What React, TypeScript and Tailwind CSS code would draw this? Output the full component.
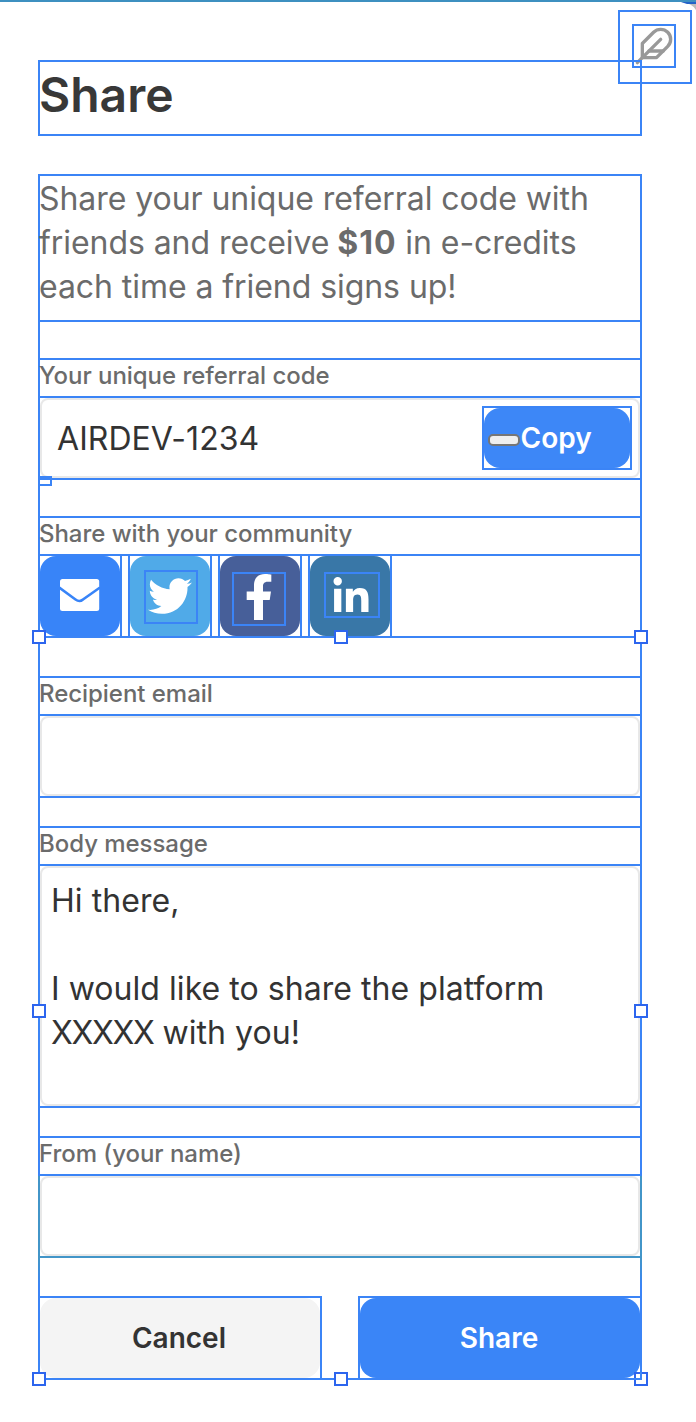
import type { ReactNode } from "react";
import { FaFacebookF, FaLinkedinIn, FaTwitter } from "react-icons/fa";

function FeatherIcon() {
    return (
        <svg className="shrink-0" width="40" height="40" viewBox="0 0 24 24" fill="none" stroke="currentColor" strokeWidth="2" strokeLinecap="round" strokeLinejoin="round">
            <path d="M20.24 12.24a6 6 0 0 0-8.49-8.49L5 10.5V19h8.5z" />
            <path d="M16 8L2 22" />
            <path d="M17.5 15H9" />
        </svg>
    )
}

function Handle({ className }: { className: string }) {
    return <span className={`absolute w-3.5 h-3.5 border-2 border-[#2d65ee] bg-white ${className}`} />
}

function Label({ children }: { children: ReactNode }) {
    return (
        <label className="block h-[38px] border-t-2 border-[#3b84f6] -indent-px text-2xl leading-[32px] tracking-[-0.04px] font-medium text-[#6b6b6b] whitespace-nowrap">
            {children}
        </label>
    )
}

function Tile({ className, children }: { className: string, children: ReactNode }) {
    return (
        <div className="w-[84px] h-20 border-x-2 border-[#3b84f6]">
            <button className={`relative w-20 h-20 rounded-2xl flex items-center justify-center text-white ${className}`}>
                {children}
            </button>
        </div>
    )
}

function App() {
    return (
        <div className="relative w-[696px] h-[1422px] overflow-hidden bg-white font-['Inter',sans-serif]">
            {/* Top edge of the popup */}
            <div className="h-0.5 bg-[#3e90c0]" />
            <svg className="absolute right-0 top-0.5" width="15" height="8" viewBox="0 0 15 8">
                <path d="M0 0H15V8Q11 1 0 0Z" fill="#bdbdbd" />
                <path d="M0 0H15V2H6Z" fill="#2463c8" />
            </svg>

            {/* Close button */}
            <button className="absolute left-[618px] top-2.5 w-[74px] h-[74px] border-2 border-[#3b84f6] flex items-start justify-start pl-3 pt-3">
                <span className="w-11 h-11 border-2 border-[#3b84f6] flex items-center justify-center text-[#999999]">
                    <FeatherIcon />
                </span>
            </button>

            <main className="relative ml-[38px] mt-[58px] w-[604px]">
                <h1 className="h-[76px] border-2 border-[#3b84f6] -indent-px text-5xl leading-[66px] font-semibold text-[#383838]">Share</h1>

                <div className="relative mt-[38px] h-[1206px] border-2 border-[#3b84f6]">
                    <p className="h-[146px] -ml-px pt-px border-b-2 border-[#3b84f6] text-[32px] leading-[44px] tracking-[-0.06px] text-[#6b6b6b] whitespace-nowrap">
                        Share your unique referral code with<br />
                        friends and receive <b className="-ml-px tracking-[0.9px]">$10</b> in e-credits<br />
                        each time a friend signs up!
                    </p>

                    {/* Referral code */}
                    <section className="mt-9">
                        <Label>Your unique referral code</Label>
                        <div className="relative h-[84px] border-y-2 border-[#3b84f6]">
                            <div className="h-20 border-2 border-[#e8e8e8] rounded-lg flex items-center justify-between pl-[15px] pr-1.5">
                                <span className="pt-0.5 text-[32px] tracking-[0.05px] text-[#333333]">AIRDEV-1234</span>
                                <div className="w-[150px] h-16 border-2 border-[#3b84f6]">
                                    <button className="w-full h-full rounded-2xl bg-[#3d87f7] flex items-center pl-1 text-white text-[28px] font-semibold">
                                        <span className="mt-1 w-8 h-3 border-2 border-[#767676] rounded-[5px] bg-[#efefef]" />
                                        <span className="ml-[0.5px]">Copy</span>
                                    </button>
                                </div>
                            </div>
                            <span className="absolute -left-0.5 top-[78px] w-3.5 h-2.5 border-2 border-[#3b84f6]" />
                        </div>
                    </section>

                    {/* Social buttons */}
                    <section className="mt-9">
                        <Label>Share with your community</Label>
                        <div className="h-[84px] -ml-0.5 border-y-2 border-[#3b84f6] flex gap-1.5">
                            <Tile className="bg-[#3884f8]">
                                <svg className="relative -top-px" width="40" height="32" viewBox="0 0 40 32">
                                    <rect width="39.2" height="32" rx="2.5" fill="white" />
                                    <path d="M-1 8.5L15.5 20.5Q19.5 23.5 23 20.5L40 8.5" fill="none" stroke="#3884f8" strokeWidth="2.6" />
                                </svg>
                            </Tile>
                            <Tile className="bg-[#50aae8]">
                                <FaTwitter size={44} />
                                <span className="absolute left-3.5 top-3.5 w-[54px] h-[54px] border-2 border-[#3b84f6]" />
                            </Tile>
                            <Tile className="bg-[#475f99]">
                                <FaFacebookF size={46} className="relative top-px -left-px" />
                                <span className="absolute left-3 top-4 w-[54px] h-[54px] border-2 border-[#3b84f6]" />
                            </Tile>
                            <Tile className="bg-[#3977a7]">
                                <FaLinkedinIn size={40} className="relative left-px top-px" />
                                <span className="absolute left-3.5 top-4 w-14 h-[46px] border-2 border-[#3b84f6]" />
                            </Tile>
                        </div>
                    </section>

                    <section className="mt-[38px]">
                        <Label>Recipient email</Label>
                        <div className="h-[84px] border-y-2 border-[#3b84f6]">
                            <div className="h-20 border-2 border-[#e8e8e8] rounded-lg" />
                        </div>
                    </section>

                    <section className="mt-7">
                        <Label>Body message</Label>
                        <div className="h-[244px] border-y-2 border-[#3b84f6]">
                            <div className="h-60 border-2 border-[#e8e8e8] rounded-lg px-[9px] pt-[11px] text-[32px] leading-[44px] tracking-[0.05px] text-[#333333]">
                                <p>Hi there,</p>
                                <p className="mt-11 whitespace-nowrap">
                                    I would like to share the platform<br />
                                    <span className="tracking-[-1.35px]">XXXXX</span> with you!
                                </p>
                            </div>
                        </div>
                    </section>

                    <section className="mt-7">
                        <Label>From (your name)</Label>
                        <div className="h-[84px] -mx-0.5 px-0.5 border-t-2 border-t-[#3b84f6] border-b-2 border-b-[#4295c8]">
                            <div className="h-20 border-2 border-[#e8e8e8] rounded-lg" />
                        </div>
                    </section>

                    {/* Actions */}
                    <div className="mt-[38px] -mx-0.5 flex justify-between text-[28px] font-semibold">
                        <div className="w-[284px] h-[84px] border-2 border-[#3b84f6]">
                            <button className="w-full h-full pr-0.5 rounded-2xl bg-[#f4f4f4] text-[#333333]">Cancel</button>
                        </div>
                        <div className="w-[284px] h-[84px] border-2 border-[#3b84f6]">
                            <button className="w-full h-full pr-0.5 rounded-2xl bg-[#3a85f7] text-white">Share</button>
                        </div>
                    </div>

                    {/* The outline blends to teal around the last field */}
                    <span className="absolute -left-0.5 top-[1000px] w-0.5 h-[110px] bg-linear-to-b from-[#4295c8] from-75% to-[#3b84f6]" />
                    <span className="absolute -right-0.5 top-[1000px] w-0.5 h-[110px] bg-linear-to-b from-[#4295c8] from-75% to-[#3b84f6]" />

                    <Handle className="-left-2 top-[454px]" />
                    <Handle className="left-[294px] top-[454px]" />
                    <Handle className="-right-2 top-[454px]" />
                    <Handle className="-left-2 top-[828px]" />
                    <Handle className="-right-2 top-[828px]" />
                    <Handle className="-left-2 top-[1196px]" />
                    <Handle className="left-[294px] top-[1196px]" />
                    <Handle className="-right-2 top-[1196px]" />
                    <span className="absolute -right-0.5 top-[1196px] w-2 h-2 border-r-2 border-b-2 border-[#3b84f6]" />
                </div>
            </main>
        </div>
    )
}

export default App;
